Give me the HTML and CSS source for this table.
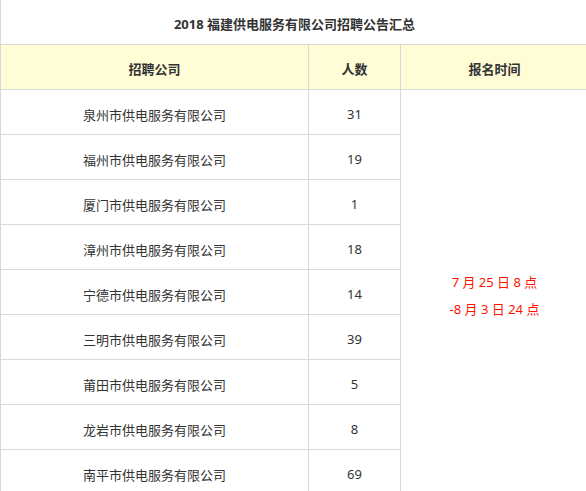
FILE: index.html
```html
<!DOCTYPE html>
<html lang="zh-CN">
<head>
<meta charset="utf-8">
<title>2018 福建供电服务有限公司招聘公告汇总</title>
<link rel="stylesheet" href="styles.css">
</head>
<body>
<table class="summary">
  <colgroup>
    <col class="col-company">
    <col class="col-count">
    <col class="col-time">
  </colgroup>
  <thead>
    <tr class="title-row">
      <th colspan="3">2018 福建供电服务有限公司招聘公告汇总</th>
    </tr>
    <tr class="head-row">
      <th>招聘公司</th>
      <th>人数</th>
      <th>报名时间</th>
    </tr>
  </thead>
  <tbody>
    <tr>
      <td>泉州市供电服务有限公司</td>
      <td>31</td>
      <td class="time" rowspan="9"><span class="line">7 月 25 日 8 点</span><span class="line">-8 月 3 日 24 点</span></td>
    </tr>
    <tr><td>福州市供电服务有限公司</td><td>19</td></tr>
    <tr><td>厦门市供电服务有限公司</td><td>1</td></tr>
    <tr><td>漳州市供电服务有限公司</td><td>18</td></tr>
    <tr><td>宁德市供电服务有限公司</td><td>14</td></tr>
    <tr><td>三明市供电服务有限公司</td><td>39</td></tr>
    <tr><td>莆田市供电服务有限公司</td><td>5</td></tr>
    <tr><td>龙岩市供电服务有限公司</td><td>8</td></tr>
    <tr><td>南平市供电服务有限公司</td><td>69</td></tr>
  </tbody>
</table>
</body>
</html>
```
FILE: styles.css
```css
html, body {
  margin: 0;
  padding: 0;
  background: #ffffff;
}

body {
  font-family: "Noto Sans", "Noto Sans CJK SC", sans-serif;
  font-size: 13px;
  color: #333333;
}

.summary {
  border-collapse: collapse;
  table-layout: fixed;
  width: 588px;
  margin-top: -1px;
}

.col-company { width: 308px; }
.col-count { width: 92px; }
.col-time { width: 188px; }

.summary th,
.summary td {
  border: 1px solid #d9d9d9;
  text-align: center;
  vertical-align: middle;
  padding: 2px 0 0;
  height: 45px;
  box-sizing: border-box;
}

.summary tbody td {
  padding-top: 4px;
}

.summary th {
  font-weight: bold;
}

.title-row th {
  background: #ffffff;
}

.head-row th {
  background: #fffdd6;
}

.summary td.time {
  color: #ff1200;
  padding-top: 7px;
}

.time .line {
  display: block;
  line-height: 27px;
}
```
